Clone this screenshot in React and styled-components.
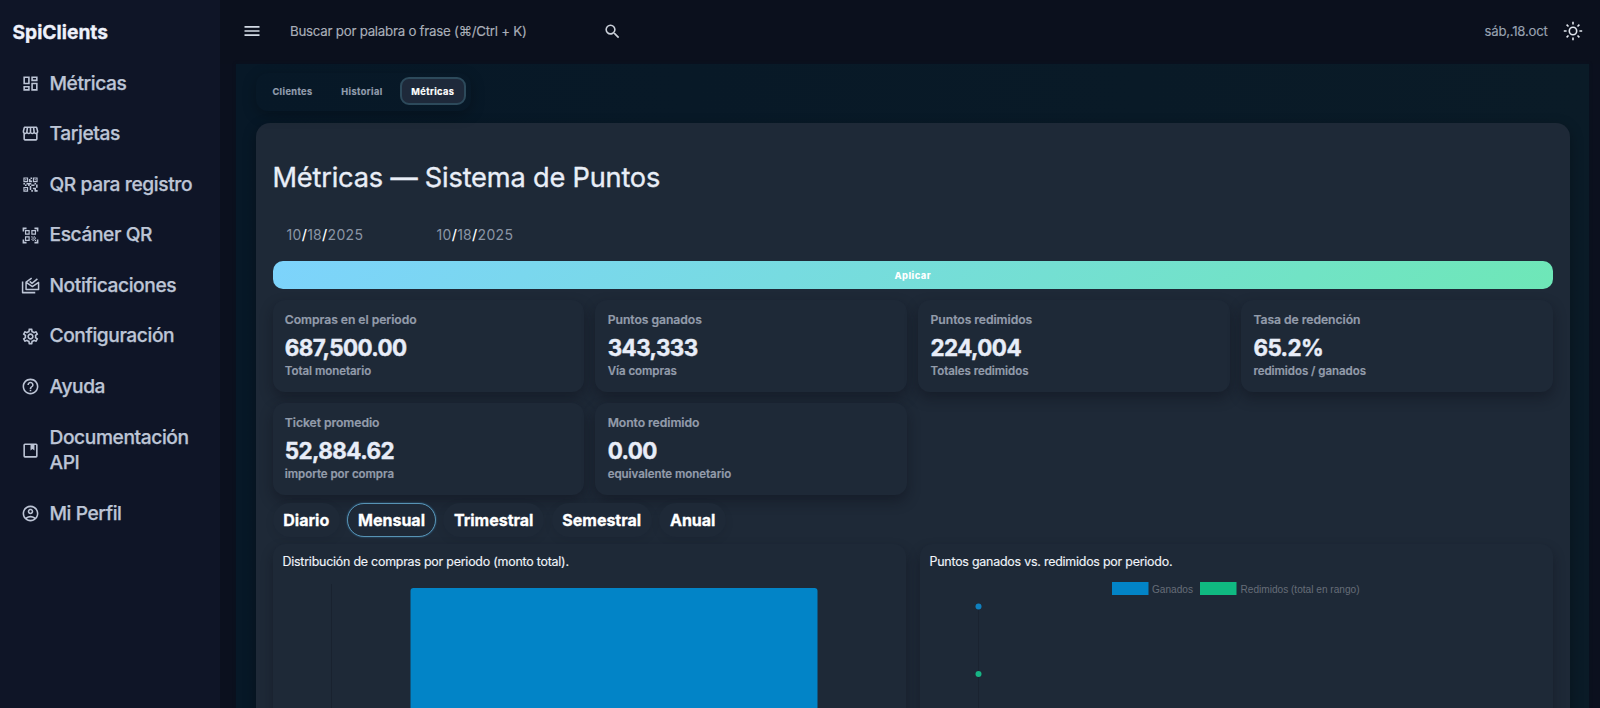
import styled, { createGlobalStyle } from "styled-components";
import {
  MdOutlineDashboard,
  MdOutlineStorefront,
  MdQrCode2,
  MdQrCodeScanner,
  MdOutlineSettings,
  MdHelpOutline,
  MdOutlineAccountCircle,
  MdMenu,
  MdSearch,
} from "react-icons/md";

const GlobalStyle = createGlobalStyle`
  * {
    box-sizing: border-box;
  }

  body {
    margin: 0;
    height: 708px;
    overflow: hidden;
    font-family: "Inter", "Liberation Sans", sans-serif;
    background: #0b101e;
  }
`;

const Page = styled.div`
  display: flex;
  height: 708px;
  overflow: hidden;
`;

const Sidebar = styled.aside`
  flex: 0 0 220px;
  background: #0f1527;
  color: #bdc5d6;
`;

const Brand = styled.div`
  height: 58px;
  padding: 17px 0 0 12.5px;
  font-size: 19.2px;
  font-weight: 700;
  line-height: 30px;
  letter-spacing: 0;
  -webkit-text-stroke: 0.3px;
  color: #eef1fb;
`;

const NavItem = styled.a`
  display: flex;
  align-items: center;
  gap: 9.5px;
  padding: 12.5px 20px 12.5px 21px;
  font-size: 19.2px;
  font-weight: 500;
  line-height: 25.6px;
  letter-spacing: -0.41px;
  -webkit-text-stroke: 0.25px;

  svg {
    flex: 0 0 19px;
    width: 19px;
    height: 19px;
  }
`;

const Main = styled.div`
  flex: 1;
  display: flex;
  flex-direction: column;
  min-width: 0;
`;

const Header = styled.header`
  flex: 0 0 64px;
  display: flex;
  align-items: center;
  padding: 0 17px 1.5px 22px;
  background: #0b101d;
  color: #d3dae5;
`;

const Search = styled.div`
  display: flex;
  align-items: center;
  justify-content: space-between;
  width: 332px;
  margin-left: 28px;
  font-size: 13.3px;
  letter-spacing: -0.25px;
  -webkit-text-stroke: 0.15px;
  color: #a9aeb8;
`;

const HeaderDate = styled.div`
  margin-left: auto;
  margin-right: 15.5px;
  font-size: 13.2px;
  letter-spacing: -0.25px;
  -webkit-text-stroke: 0.15px;
  color: #99a2b1;
`;

const Content = styled.main`
  flex: 1;
  min-height: 0;
  margin: 0 11px 0 16px;
  padding: 9px 19.5px 0 20px;
  background: linear-gradient(90deg, #071827, #0a1b27);
  box-shadow: 0 0 3px #081320;
`;

const Tabs = styled.nav`
  display: inline-flex;
  height: 38px;
  padding: 4px 5px;
  gap: 6px;
  border-radius: 12px;
  box-shadow: 0 4px 14px rgba(0, 0, 0, 0.25);
`;

const Tab = styled.button`
  height: 28px;
  padding: 0 9.4px;
  border: 2px solid ${(props) => (props.$active ? "#2d4a5b" : "transparent")};
  border-radius: 9px;
  background: ${(props) => (props.$active ? "#1e293a" : "transparent")};
  color: ${(props) => (props.$active ? "#ffffff" : "#939eae")};
  font-family: inherit;
  font-size: 9.2px;
  font-weight: 700;
  letter-spacing: 0.41px;
  -webkit-text-stroke: 0.2px;
`;

const Card = styled.section`
  height: 700px;
  margin-top: 12px;
  padding: 37px 16.5px 0;
  border-radius: 14px;
  background: #1e2937;
  box-shadow: 0 4px 14px rgba(0, 0, 0, 0.3);
`;

const Title = styled.h1`
  margin: 0;
  font-size: 27.2px;
  font-weight: 400;
  line-height: 36px;
  letter-spacing: -0.19px;
  -webkit-text-stroke: 0.35px;
  color: #e9eef7;
`;

const Dates = styled.div`
  display: flex;
  padding: 28px 14px 16px;
  font-size: 14px;
  line-height: 21px;
  color: #8b95a5;
`;

const DateField = styled.div`
  width: 150px;
  letter-spacing: 0.3px;

  b {
    color: #ffffff;
    font-weight: 500;
  }
`;

const ApplyButton = styled.button`
  display: block;
  width: 100%;
  height: 28px;
  padding: 0;
  border: 0;
  border-radius: 10px;
  background: linear-gradient(135deg, #7dd3fc, #6ee7b7);
  color: #ffffff;
  font-family: inherit;
  font-size: 9.3px;
  font-weight: 800;
  letter-spacing: 0.45px;
`;

const Stats = styled.div`
  display: grid;
  grid-template-columns: repeat(4, 1fr);
  gap: 10.5px 11px;
  margin-top: 11px;
`;

const Stat = styled.div`
  height: 92px;
  padding: 11px 12.3px;
  border-radius: 12px;
  background: #1e2937;
  box-shadow: 0 6px 13px rgba(12, 15, 25, 0.42);
  font-size: 12.2px;
  font-weight: 600;
  line-height: 18px;
  letter-spacing: -0.06px;
  -webkit-text-stroke: 0.2px;
  color: #939cab;
`;

const StatValue = styled.div`
  margin: 5px 0 1px;
  font-size: 22.4px;
  font-weight: 700;
  line-height: 28px;
  letter-spacing: -0.57px;
  -webkit-text-stroke: 0.4px;
  color: #e8edf8;
`;

const StatHint = styled.div`
  font-size: 11.5px;
  line-height: 16px;
  letter-spacing: -0.04px;
`;

const Ranges = styled.div`
  display: flex;
  gap: 7.3px;
  margin-top: 8.5px;
`;

const Range = styled.button`
  height: 34px;
  padding: 0 9.8px;
  border: 1.5px solid ${(props) => (props.$active ? "#5793b4" : "transparent")};
  border-radius: 17px;
  background: #1e2937;
  box-shadow: ${(props) => (props.$active ? "0 0 2px #38729c" : "0 3px 10px rgba(12, 15, 25, 0.08)")};
  color: #ffffff;
  font-family: inherit;
  font-size: 16px;
  font-weight: 700;
  letter-spacing: -0.01px;
  -webkit-text-stroke: 0.3px;
`;

const Charts = styled.div`
  display: grid;
  grid-template-columns: 633.5px 633.5px;
  gap: 13.5px;
  margin-top: 7px;
`;

const ChartCard = styled.div`
  height: 300px;
  padding: 8px 10px;
  border-radius: 12px;
  background: #1e2937;
  box-shadow: 0 6px 12px rgba(12, 15, 25, 0.4);
  font-size: 12.4px;
  line-height: 20px;
  letter-spacing: -0.21px;
  -webkit-text-stroke: 0.15px;
  color: #f0f4fa;

  svg {
    display: block;
    margin-top: 6px;
    letter-spacing: 0;
    -webkit-text-stroke: 0;
  }
`;

const navItems = [
  { label: "Métricas", icon: MdOutlineDashboard },
  { label: "Tarjetas", icon: MdOutlineStorefront },
  { label: "QR para registro", icon: MdQrCode2 },
  { label: "Escáner QR", icon: MdQrCodeScanner },
  { label: "Notificaciones", icon: StackedMailIcon },
  { label: "Configuración", icon: SettingsIcon },
  { label: "Ayuda", icon: MdHelpOutline },
  { label: "Documentación API", icon: BookIcon },
  { label: "Mi Perfil", icon: MdOutlineAccountCircle },
];

const stats = [
  ["Compras en el periodo", "687,500.00", "Total monetario"],
  ["Puntos ganados", "343,333", "Vía compras"],
  ["Puntos redimidos", "224,004", "Totales redimidos"],
  ["Tasa de redención", "65.2%", "redimidos / ganados"],
  ["Ticket promedio", "52,884.62", "importe por compra"],
  ["Monto redimido", "0.00", "equivalente monetario"],
];

const ranges = ["Diario", "Mensual", "Trimestral", "Semestral", "Anual"];

function StackedMailIcon() {
  return (
    <svg viewBox="0 0 24 24" fill="none" stroke="currentColor" strokeWidth="1.9" strokeLinejoin="round">
      <path d="M2 7v14H18" />
      <path d="M13.5 2.6L6.4 7.6v9.6h15.8V8.2l-7.8 5.2-7.8-5.2" />
      <path d="M11 6.8l2.9 2.5 6.8-5.6" />
    </svg>
  );
}

function SettingsIcon() {
  return (
    <MdOutlineSettings>
      <circle cx="12" cy="12" r="3" />
    </MdOutlineSettings>
  );
}

function BookIcon() {
  return (
    <svg viewBox="0 0 24 24" fill="none" stroke="currentColor" strokeWidth="2" strokeLinejoin="round">
      <rect x="4" y="4" width="16" height="16" rx="1" />
      <path d="M12 4v8l2.5-2 2.5 2V4z" fill="currentColor" stroke="none" />
    </svg>
  );
}

function SunIcon() {
  return (
    <svg width="20" height="20" viewBox="0 0 20 20" fill="none" stroke="#e1e6ee" strokeWidth="1.6">
      <circle cx="10" cy="10" r="3.7" />
      <path d="M10 .8v2.8M10 16.4v2.8M.8 10h2.8M16.4 10h2.8M3.6 3.6l1.9 1.9M14.5 14.5l1.9 1.9M3.6 16.4l1.9-1.9M14.5 5.5l1.9-1.9" />
    </svg>
  );
}

function BarChart() {
  return (
    <svg width="612" height="150">
      <path d="M48.5 6v144" stroke="#19222f" />
      <rect x="127.5" y="10" width="407" height="150" rx="3" fill="#0284c7" />
    </svg>
  );
}

function PointsChart() {
  return (
    <svg width="612" height="150" fontFamily="Liberation Sans, Arial, sans-serif" fontSize="11.6" fill="#666d77">
      <path d="M48.5 29v121" stroke="#1a2330" />
      <rect x="182" y="4" width="36.5" height="13" fill="#0284c7" />
      <text x="222" y="14.5" textLength="41" lengthAdjust="spacingAndGlyphs">Ganados</text>
      <rect x="270" y="4" width="36.5" height="13" fill="#10b981" />
      <text x="310.5" y="14.5" textLength="119" lengthAdjust="spacingAndGlyphs">Redimidos (total en rango)</text>
      <circle cx="48.5" cy="28.5" r="3" fill="#0f80bf" />
      <circle cx="48.5" cy="96" r="3" fill="#17b585" />
    </svg>
  );
}

function DateInput() {
  return (
    <DateField>
      10<b>/</b>18<b>/</b>2025
    </DateField>
  );
}

export default function App() {
  return (
    <Page>
      <GlobalStyle />
      <Sidebar>
        <Brand>SpiClients</Brand>
        {navItems.map(({ label, icon: Icon }) => (
          <NavItem key={label}>
            <Icon />
            <span>{label}</span>
          </NavItem>
        ))}
      </Sidebar>
      <Main>
        <Header>
          <MdMenu size={20} />
          <Search>
            <span>Buscar por palabra o frase (⌘/Ctrl + K)</span>
            <MdSearch size={19} color="#cbd0d9" />
          </Search>
          <HeaderDate>sáb,.18.oct</HeaderDate>
          <SunIcon />
        </Header>
        <Content>
          <Tabs>
            <Tab>Clientes</Tab>
            <Tab>Historial</Tab>
            <Tab $active>Métricas</Tab>
          </Tabs>
          <Card>
            <Title>Métricas — Sistema de Puntos</Title>
            <Dates>
              <DateInput />
              <DateInput />
            </Dates>
            <ApplyButton>Aplicar</ApplyButton>
            <Stats>
              {stats.map(([label, value, hint]) => (
                <Stat key={label}>
                  <div>{label}</div>
                  <StatValue>{value}</StatValue>
                  <StatHint>{hint}</StatHint>
                </Stat>
              ))}
            </Stats>
            <Ranges>
              {ranges.map((range) => (
                <Range key={range} $active={range === "Mensual"}>
                  {range}
                </Range>
              ))}
            </Ranges>
            <Charts>
              <ChartCard>
                Distribución de compras por periodo (monto total).
                <BarChart />
              </ChartCard>
              <ChartCard>
                Puntos ganados vs. redimidos por periodo.
                <PointsChart />
              </ChartCard>
            </Charts>
          </Card>
        </Content>
      </Main>
    </Page>
  );
}
